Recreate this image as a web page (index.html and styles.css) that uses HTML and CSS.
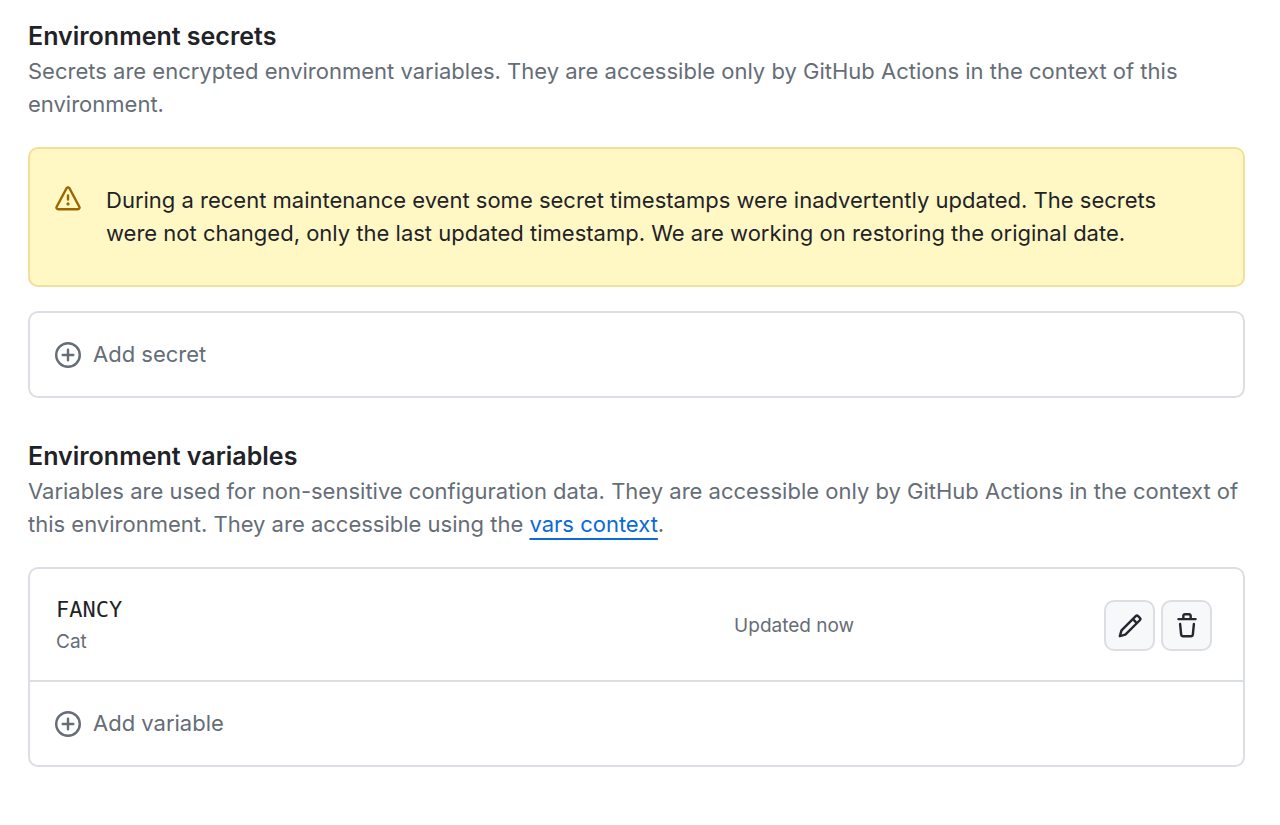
FILE: index.html
```
<!DOCTYPE html>
<html lang="en">
<head>
<meta charset="utf-8">
<meta name="viewport" content="width=device-width, initial-scale=1">
<title>Environment secrets and variables</title>
<link rel="stylesheet" href="styles.css">
</head>
<body>
<main class="page">
  <section class="section">
    <h2 class="section-title">Environment secrets</h2>
    <p class="section-text">Secrets are encrypted environment variables. They are accessible only by GitHub Actions in the context of this environment.</p>
    <div class="flash" role="status">
      <svg class="icon icon-alert" viewBox="0 0 16 16" aria-hidden="true"><path d="M6.457 1.047c.659-1.234 2.427-1.234 3.086 0l6.082 11.378A1.75 1.75 0 0 1 14.082 15H1.918a1.75 1.75 0 0 1-1.543-2.575Zm1.763.707a.25.25 0 0 0-.44 0L1.698 13.132a.25.25 0 0 0 .22.368h12.164a.25.25 0 0 0 .22-.368Zm.53 3.996v2.5a.75.75 0 0 1-1.5 0v-2.5a.75.75 0 0 1 1.5 0ZM9 11a1 1 0 1 1-2 0 1 1 0 0 1 2 0Z"/></svg>
      <p class="flash-text">During a recent maintenance event some secret timestamps were inadvertently updated. The secrets were not changed, only the last updated timestamp. We are working on restoring the original date.</p>
    </div>
    <div class="box">
      <button class="add-button" type="button">
        <svg class="icon" viewBox="0 0 16 16" aria-hidden="true"><path d="M8 0a8 8 0 1 1 0 16A8 8 0 0 1 8 0ZM1.5 8a6.5 6.5 0 1 0 13 0 6.5 6.5 0 0 0-13 0Zm7.25-3.25v2.5h2.5a.75.75 0 0 1 0 1.5h-2.5v2.5a.75.75 0 0 1-1.5 0v-2.5h-2.5a.75.75 0 0 1 0-1.5h2.5v-2.5a.75.75 0 0 1 1.5 0Z"/></svg>
        Add secret
      </button>
    </div>
  </section>

  <section class="section">
    <h2 class="section-title">Environment variables</h2>
    <p class="section-text">Variables are used for non-sensitive configuration data. They are accessible only by GitHub Actions in the context of this environment. They are accessible using the <a class="link" href="#vars">vars context</a>.</p>
    <div class="box">
      <div class="variable">
        <div class="variable-main">
          <code class="variable-name">FANCY</code>
          <span class="small-text">Cat</span>
        </div>
        <span class="small-text">Updated now</span>
        <div class="actions">
          <button class="icon-button" type="button" aria-label="Edit FANCY">
            <svg class="icon" viewBox="0 0 16 16" aria-hidden="true"><path d="M11.013 1.427a1.75 1.75 0 0 1 2.474 0l1.086 1.086a1.75 1.75 0 0 1 0 2.474l-8.61 8.61c-.21.21-.47.364-.756.445l-3.251.93a.75.75 0 0 1-.927-.928l.929-3.25c.081-.286.235-.547.445-.758l8.61-8.61Zm.176 4.823L9.75 4.81l-6.286 6.287a.253.253 0 0 0-.064.108l-.558 1.953 1.953-.558a.253.253 0 0 0 .108-.064Zm1.238-3.763a.25.25 0 0 0-.354 0L10.811 3.75l1.439 1.44 1.263-1.263a.25.25 0 0 0 0-.354Z"/></svg>
          </button>
          <button class="icon-button" type="button" aria-label="Delete FANCY">
            <svg class="icon" viewBox="0 0 16 16" aria-hidden="true"><path d="M11 1.75V3h2.25a.75.75 0 0 1 0 1.5H2.75a.75.75 0 0 1 0-1.5H5V1.75C5 .784 5.784 0 6.75 0h2.5C10.216 0 11 .784 11 1.75ZM4.496 6.675l.66 6.6a.25.25 0 0 0 .249.225h5.19a.25.25 0 0 0 .249-.225l.66-6.6a.75.75 0 0 1 1.492.149l-.66 6.6A1.748 1.748 0 0 1 10.595 15h-5.19a1.75 1.75 0 0 1-1.741-1.575l-.66-6.6a.75.75 0 1 1 1.492-.15ZM6.5 1.75V3h3V1.75a.25.25 0 0 0-.25-.25h-2.5a.25.25 0 0 0-.25.25Z"/></svg>
          </button>
        </div>
      </div>
      <button class="add-button" type="button">
        <svg class="icon" viewBox="0 0 16 16" aria-hidden="true"><path d="M8 0a8 8 0 1 1 0 16A8 8 0 0 1 8 0ZM1.5 8a6.5 6.5 0 1 0 13 0 6.5 6.5 0 0 0-13 0Zm7.25-3.25v2.5h2.5a.75.75 0 0 1 0 1.5h-2.5v2.5a.75.75 0 0 1-1.5 0v-2.5h-2.5a.75.75 0 0 1 0-1.5h2.5v-2.5a.75.75 0 0 1 1.5 0Z"/></svg>
        Add variable
      </button>
    </div>
  </section>
</main>
</body>
</html>
```
FILE: styles.css
```
* {
  box-sizing: border-box;
}

body {
  margin: 0;
  background: #fff;
  color: #1f2328;
  font-family: Inter, "Liberation Sans", sans-serif;
  font-size: 22px;
  line-height: 33px;
}

.page {
  display: flex;
  flex-direction: column;
  gap: 41px;
  padding: 19px 35px 20px 28px;
}

.section-title {
  margin: 0 0 1px;
  font-size: 25px;
  font-weight: 600;
  line-height: 35px;
}

.section-text {
  margin: 0 0 26px;
  color: #656d76;
}

.link {
  color: #0969da;
  text-decoration: underline;
  text-decoration-thickness: 2px;
  text-underline-offset: 6px;
}

.icon {
  display: block;
  flex: none;
  width: 26px;
  height: 26px;
  fill: currentColor;
}

.flash {
  display: flex;
  align-items: flex-start;
  gap: 25px;
  margin-bottom: 24px;
  padding: 35px 60px 35px 25px;
  border: 2px solid #f3df98;
  border-radius: 10px;
  background: #fff8c5;
}

.icon-alert {
  margin-top: 2px;
  color: #9a6700;
}

.flash-text {
  margin: 0;
}

.box {
  border: 2px solid #dbdfe3;
  border-radius: 10px;
}

.add-button {
  display: flex;
  align-items: center;
  gap: 12px;
  width: 100%;
  padding: 25px;
  border: 0;
  background: none;
  color: #656d76;
  font: inherit;
  text-align: left;
}

.variable {
  display: grid;
  grid-template-columns: 11fr 6fr auto;
  align-items: center;
  padding: 24px 31px 22px 26px;
  border-bottom: 2px solid #dbdfe3;
}

.variable-main {
  display: flex;
  flex-direction: column;
}

.variable-name {
  font-family: "DejaVu Sans Mono", "Liberation Mono", monospace;
  font-size: 22px;
}

.small-text {
  color: #656d76;
  font-size: 19px;
  line-height: 32px;
}

.actions {
  display: flex;
  gap: 6px;
}

.icon-button {
  display: grid;
  place-items: center;
  width: 51px;
  height: 51px;
  padding: 0;
  border: 2px solid #dcdee2;
  border-radius: 10px;
  background: #f6f8fa;
  color: #24292f;
}
```
